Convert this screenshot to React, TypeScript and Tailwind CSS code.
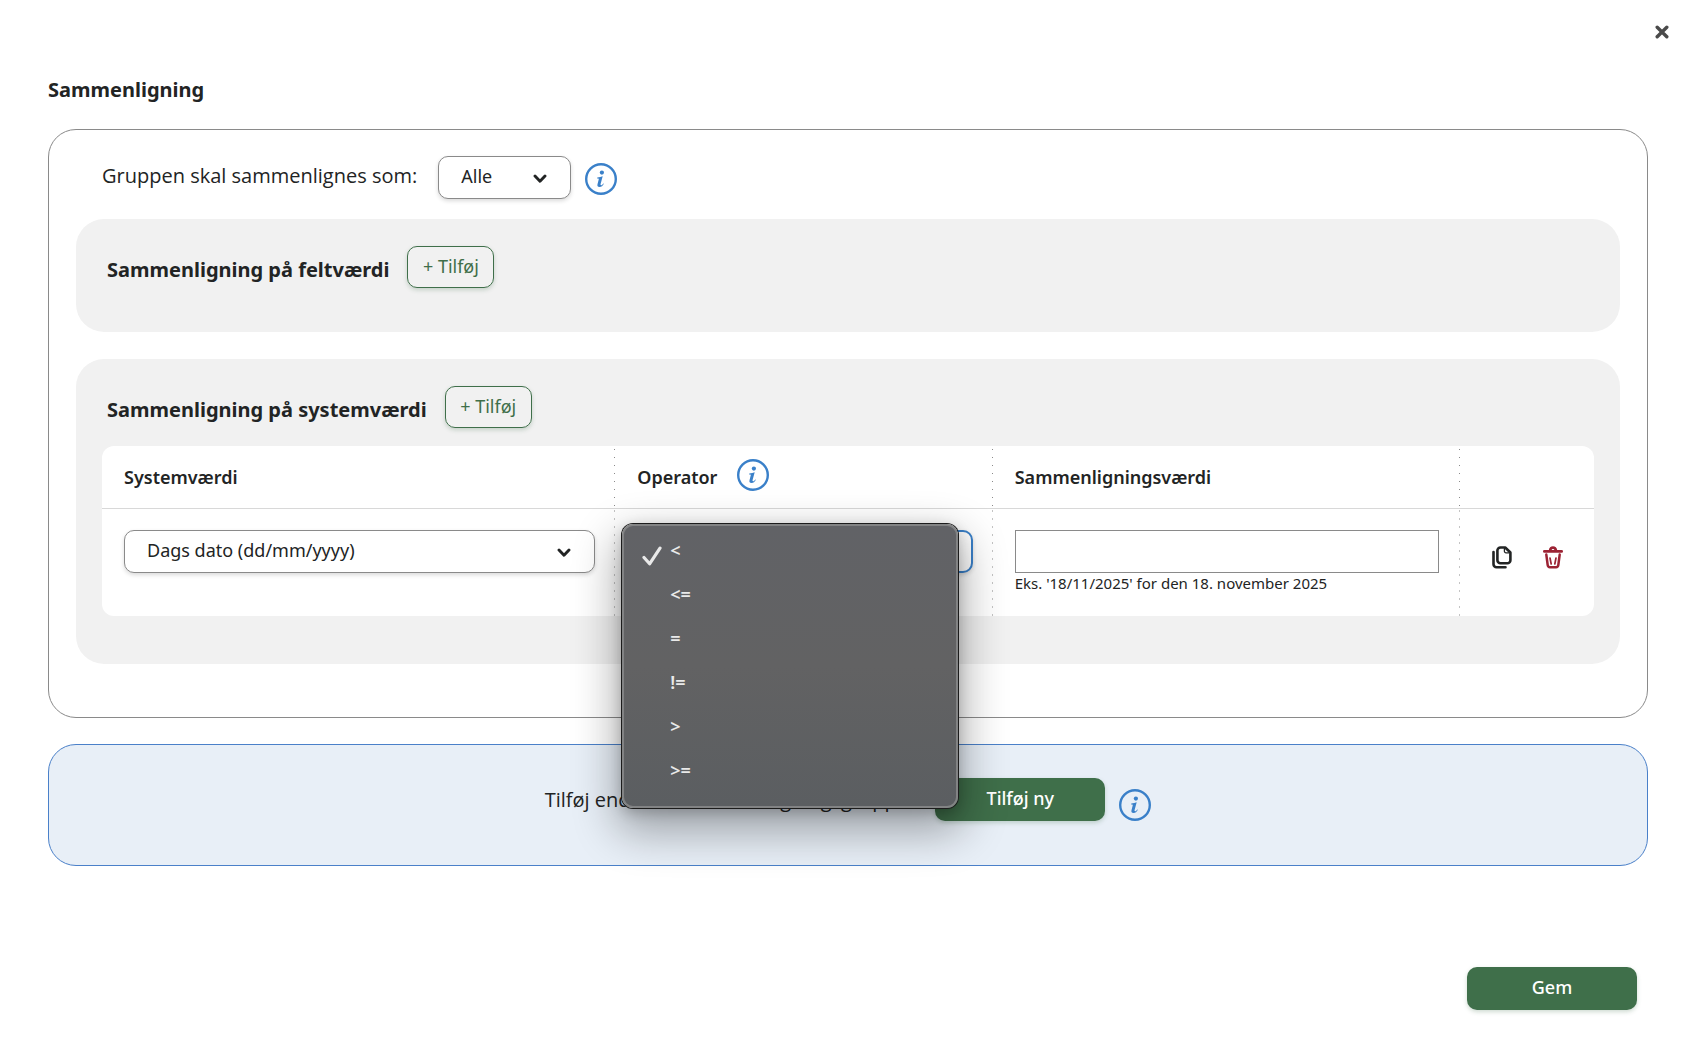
import type { ReactNode } from 'react';

const OPERATORS = ['<', '<=', '=', '!=', '>', '>='];

function InfoButton({ label }: { label: string }) {
  return (
    <button type="button" aria-label={label} className="block size-8 shrink-0">
      <svg viewBox="0 0 32 32" className="size-8" fill="none">
        <circle cx="16" cy="16" r="14.8" stroke="#3a80c9" strokeWidth="2.4" />
        <circle cx="16.9" cy="9.600" r="2.100" fill="#3a80c9" />
        <path
          d="M12.300 14.400c2.100-.2 3.900-.6 5.400-1.200l-2.100 7.900c-.2.9.1 1.100.5 1.100.7 0 1.500-.8 2.200-1.800l.6.4c-1.100 2-2.500 3.300-4.400 3.300-1.800 0-2.400-1.100-2-2.800l1.200-4.700c.2-.9 0-1.200-.7-1.200h-.9z"
          fill="#3a80c9"
        />
      </svg>
    </button>
  );
}

function Chevron({ className }: { className: string }) {
  return (
    <svg
      viewBox="0 0 14 10"
      fill="none"
      stroke="#222424"
      strokeWidth="2.900"
      strokeLinecap="round"
      strokeLinejoin="round"
      className={`pointer-events-none absolute top-[18px] h-[10px] w-[14px] ${className}`}
    >
      <path d="M2 2l5 5.200L12 2" />
    </svg>
  );
}

function AddButton() {
  return (
    <button
      type="button"
      className="h-[42px] w-[87px] rounded-[10px] border border-[#3f6f4a] pb-0.5 text-[18px] leading-6 text-[#3f6f4a] shadow-[0_2px_4px_rgba(63,111,74,0.25)]"
    >
      + Tilføj
    </button>
  );
}

function PrimaryButton({ children }: { children: ReactNode }) {
  return (
    <button
      type="button"
      className="h-[43px] w-[170px] shrink-0 rounded-[10px] bg-[#3f6f4a] pb-1 text-[18px] font-medium leading-6 text-white shadow-[0_2px_4px_rgba(63,111,74,0.25)]"
    >
      {children}
    </button>
  );
}

function CopyIcon() {
  return (
    <svg viewBox="0 0 20 23" className="h-[23px] w-5" fill="none" stroke="#222424" strokeLinecap="round" strokeLinejoin="round">
      <path d="M8.500 1.500h4.700l5.200 5v7.700a3.100 3.100 0 0 1-3.100 3.100H8.500a3.100 3.100 0 0 1-3.100-3.100V4.600a3.100 3.100 0 0 1 3.100-3.100z" strokeWidth="2.600" />
      <path d="M12.400 2.500v2.700a1.600 1.600 0 0 0 1.600 1.600h3.400" strokeWidth="1.300" />
      <path d="M1.500 6v12.200a3 3 0 0 0 3 3h9" strokeWidth="2.600" />
    </svg>
  );
}

function TrashIcon() {
  return (
    <svg viewBox="0 0 20 23" className="h-[23px] w-5" fill="none" stroke="#9c2334" strokeLinecap="round" strokeLinejoin="round">
      <path d="M1.300 5.400h17.400" strokeWidth="2.600" />
      <path d="M7.200 4.400c0-3.800 5.600-3.800 5.600 0" strokeWidth="2.800" />
      <path d="M3.300 8.600l1.400 10.600a2.300 2.300 0 0 0 2.300 2h6a2.300 2.300 0 0 0 2.300-2l1.400-10.600" strokeWidth="2.500" />
      <path d="M7 12l1.200 6M13 12l-1.200 6" strokeWidth="1.700" />
    </svg>
  );
}

const headDots =
  'bg-[linear-gradient(#8a8a8a_1px,transparent_1px)] bg-[length:1px_8px] bg-[position:right_3px] bg-repeat-y';
const bodyDots =
  'bg-[linear-gradient(#c4c4c4_2px,transparent_2px)] bg-[length:1px_8px] bg-[position:right_1px] bg-repeat-y';

export default function App() {
  return (
    <main className="min-h-screen bg-white pl-12 pr-[50px] font-['Noto_Sans','Open_Sans',sans-serif] text-[#222424]">
      <div className="-mr-[26px] flex justify-end pt-5">
        <button type="button" aria-label="Luk" className="flex size-6 items-center justify-center">
          <svg viewBox="0 0 14 14" className="size-[14px]" stroke="#4a4a4a" strokeWidth="3.400" strokeLinecap="round">
            <path d="M2.200 2.200l9.600 9.600M11.800 2.200L2.200 11.800" />
          </svg>
        </button>
      </div>

      <h1 className="mt-8 text-[20px] font-bold leading-7">Sammenligning</h1>

      <section className="mt-[25px] rounded-[28px] border border-[#8a8a8a] px-[27px] pb-[53px] pt-[26px]">
        <div className="flex items-center pl-[26px]">
          <label htmlFor="group-mode" className="pb-1 font-['Open_Sans','Noto_Sans',sans-serif] text-[20px] leading-7">
            Gruppen skal sammenlignes som:
          </label>
          <div className="relative ml-[21px]">
            <select
              id="group-mode"
              className="block h-[43px] w-[133px] appearance-none rounded-[10px] border border-[#8a8a8a] bg-white pb-0.5 pl-[22px] text-[18px] shadow-[0_2px_4px_rgba(0,0,0,0.15)]"
            >
              <option>Alle</option>
            </select>
            <Chevron className="right-6" />
          </div>
          <div className="ml-[14px] pt-[3px]">
            <InfoButton label="Hjælp til gruppe" />
          </div>
        </div>

        <div className="mt-5 flex h-[113px] items-start rounded-[28px] bg-[#f1f1f1] pl-[31px] pt-[27px]">
          <h2 className="mr-[18px] pt-[10px] text-[20px] font-bold leading-7">Sammenligning på feltværdi</h2>
          <AddButton />
        </div>

        <div className="mt-[27px] rounded-[28px] bg-[#f1f1f1] px-[26px] pb-12 pt-[27px]">
          <div className="flex items-start pl-[5px]">
            <h2 className="mr-[18px] pt-[10px] text-[20px] font-bold leading-7">Sammenligning på systemværdi</h2>
            <AddButton />
          </div>

          <table className="mt-[18px] w-full table-fixed border-separate border-spacing-0 rounded-xl bg-white text-left">
            <colgroup>
              <col className="w-[34.4%]" />
              <col className="w-[25.3%]" />
              <col className="w-[31.3%]" />
              <col />
            </colgroup>
            <thead className="text-[18px] leading-6">
              <tr className="h-[63px]">
                <th scope="col" className={`border-b border-[#d8d8d8] px-[22px] font-semibold ${headDots}`}>
                  Systemværdi
                </th>
                <th scope="col" className={`border-b border-[#d8d8d8] px-[22px] font-semibold ${headDots}`}>
                  <div className="flex items-center">
                    <span>Operator</span>
                    <span className="ml-5 pb-1">
                      <InfoButton label="Hjælp til operator" />
                    </span>
                  </div>
                </th>
                <th scope="col" className={`border-b border-[#d8d8d8] px-[22px] font-semibold ${headDots}`}>
                  Sammenligningsværdi
                </th>
                <th scope="col" aria-label="Handlinger" className="border-b border-[#d8d8d8]" />
              </tr>
            </thead>
            <tbody>
              <tr className="h-[107px] align-top">
                <td className={`pl-[22px] pr-5 pt-[21px] ${bodyDots}`}>
                  <div className="relative">
                    <select
                      aria-label="Systemværdi"
                      className="block h-[43px] w-full appearance-none rounded-[10px] border border-[#8a8a8a] bg-white pb-0.5 pl-[22px] text-[18px] shadow-[0_2px_4px_rgba(0,0,0,0.15)]"
                    >
                      <option>Dags dato (dd/mm/yyyy)</option>
                    </select>
                    <Chevron className="right-6" />
                  </div>
                </td>
                <td className={`pl-[22px] pr-5 pt-[21px] ${bodyDots}`}>
                  <div className="relative">
                    <select
                      aria-label="Operator"
                      className="block h-[43px] w-full appearance-none rounded-[10px] border-2 border-[#3a80c9] bg-white pl-[22px] text-[18px] shadow-[0_2px_4px_rgba(0,0,0,0.15)]"
                    >
                      {OPERATORS.map((operator) => (
                        <option key={operator}>{operator}</option>
                      ))}
                    </select>
                    <ul
                      role="listbox"
                      aria-label="Operatorer"
                      className="absolute -left-[15px] -top-1.5 z-10 w-[336px] rounded-[11px] border-2 border-[#828384] bg-linear-to-b from-[#616266] via-[#626263] to-[#5b5e61] pb-3.5 pt-0.5 text-[18px] font-semibold leading-[44px] text-[#e9e9e9] shadow-[0_0_0_1px_#1c1c1c,0_18px_44px_6px_rgba(0,0,0,0.32),0_4px_14px_rgba(0,0,0,0.22)]"
                    >
                      {OPERATORS.map((operator, index) => (
                        <li
                          key={operator}
                          role="option"
                          aria-selected={index === 0}
                          className="flex h-11 items-center pl-[18px]"
                        >
                          <span className="w-7 pt-3">
                            {index === 0 && (
                              <svg viewBox="0 0 20 20" className="size-5" fill="none" stroke="#e9e9e9" strokeWidth="3.200" strokeLinecap="round" strokeLinejoin="round">
                                <path d="M2 11.500l5.600 6.300L18 2.200" />
                              </svg>
                            )}
                          </span>
                          {operator}
                        </li>
                      ))}
                    </ul>
                  </div>
                </td>
                <td className={`pl-[22px] pr-[21px] pt-[21px] ${bodyDots}`}>
                  <input
                    type="text"
                    aria-label="Sammenligningsværdi"
                    aria-describedby="value-hint"
                    className="block h-[43px] w-full border border-[#8a8a8a] bg-white px-3 text-[18px]"
                  />
                  <p id="value-hint" className="text-[15px] leading-5">
                    Eks. '18/11/2025' for den 18. november 2025
                  </p>
                </td>
                <td className="pl-8 pt-[37px]">
                  <div className="flex gap-[31px]">
                    <button type="button" aria-label="Kopiér">
                      <CopyIcon />
                    </button>
                    <button type="button" aria-label="Slet">
                      <TrashIcon />
                    </button>
                  </div>
                </td>
              </tr>
            </tbody>
          </table>
        </div>
      </section>

      <section className="mt-[26px] flex h-[122px] items-start justify-center rounded-[28px] border border-[#4a80c9] bg-[#e8eff7] pt-[33px]">
        <p className="mr-[22px] pt-2 font-['Open_Sans','Noto_Sans',sans-serif] text-[20px] leading-7">
          Tilføj endnu en sammenligningsgruppe:
        </p>
        <PrimaryButton>Tilføj ny</PrimaryButton>
        <div className="ml-[14px] pt-[11px]">
          <InfoButton label="Hjælp til ny gruppe" />
        </div>
      </section>

      <div className="mr-[11px] mt-[101px] flex justify-end">
        <PrimaryButton>Gem</PrimaryButton>
      </div>
    </main>
  );
}
